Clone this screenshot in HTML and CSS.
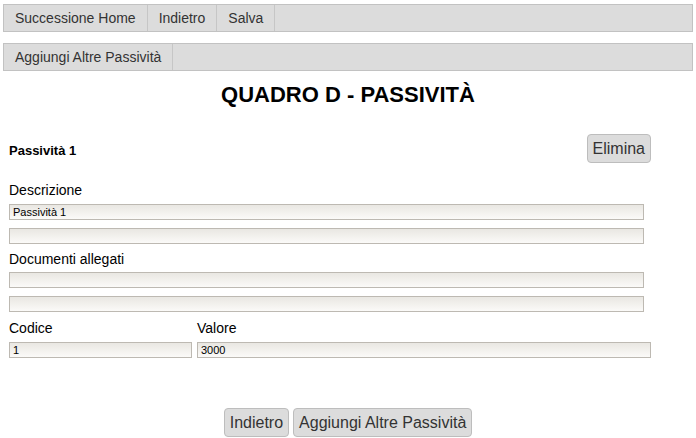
FILE: index.html
```html
<!DOCTYPE html>
<html lang="it">

<head>
    <meta charset="UTF-8">
    <meta name="viewport" content="width=device-width, initial-scale=1.0">
    <title>Quadro D - Passività</title>
    <link rel="stylesheet" href="styles.css">
</head>

<body>
    <div class="navbar">
        <a href="#">Successione Home</a>
        <a href="#">Indietro</a>
        <a href="#">Salva</a>
    </div>

    <div class="navbar navbar-secondo">
        <a href="#">Aggiungi Altre Passività</a>
    </div>

    <h1 class="titolo">QUADRO D - PASSIVITÀ</h1>

    <div class="passivita">
        <div class="passivita-testa">
            <h2>Passività 1</h2>
            <button class="btn">Elimina</button>
        </div>

        <label class="etichetta">Descrizione</label>
        <input class="campo" type="text" value="Passività 1">
        <input class="campo" type="text" value="">

        <label class="etichetta">Documenti allegati</label>
        <input class="campo" type="text" value="">
        <input class="campo" type="text" value="">

        <div class="riga-valori">
            <div>
                <label class="etichetta">Codice</label>
                <input class="campo" type="text" value="1">
            </div>
            <div>
                <label class="etichetta">Valore</label>
                <input class="campo" type="text" value="3000">
            </div>
        </div>
    </div>

    <div class="azioni">
        <button class="btn">Indietro</button>
        <button class="btn">Aggiungi Altre Passività</button>
    </div>
</body>

</html>
```

FILE: styles.css
```css
* {
    padding: 0;
    margin: 0;
    box-sizing: border-box;
}

body {
    background: #fff;
    color: #000;
    font-family: "Liberation Sans", Arial, sans-serif;
    font-size: 14px;
}

/* Barre di navigazione */
.navbar {
    display: flex;
    margin: 4px 3px 0;
    height: 28px;
    background-color: #dcdcdc;
    border: 1px solid #c2c2c2;
}

.navbar a {
    padding: 0 11px;
    line-height: 26px;
    color: #333;
    text-decoration: none;
    border-right: 1px solid #c6c6c6;
    font-size: 14px;
}

.navbar-secondo {
    margin-top: 11px;
}

/* Titolo */
.titolo {
    margin-top: 12px;
    text-align: center;
    font-size: 22px;
    line-height: 24px;
}

/* Blocco passività */
.passivita {
    padding: 0 45px 0 9px;
}

.passivita-testa {
    display: flex;
    justify-content: space-between;
    align-items: center;
    margin-top: 27px;
}

.passivita-testa h2 {
    font-size: 13px;
    padding-top: 4px;
}

.etichetta {
    display: block;
    line-height: 18px;
    margin-top: 5px;
    margin-bottom: 5px;
}

.passivita-testa + .etichetta {
    margin-top: 18px;
}

.campo + .etichetta {
    margin-bottom: 4px;
}

.campo {
    display: block;
    width: 635px;
    height: 16px;
    margin-bottom: 6px;
    padding: 0 3px;
    border: 1px solid #bdb9b2;
    background: linear-gradient(#e9e7e2, #fbfaf8);
    font-family: "Liberation Sans", Arial, sans-serif;
    font-size: 11px;
    color: #000;
}

.campo + .campo {
    margin-top: 8px;
}

.riga-valori {
    display: grid;
    grid-template-columns: 183px 454px;
    gap: 5px;
    margin-top: 7px;
}

.riga-valori .etichetta {
    margin-top: 0;
}

.riga-valori .campo {
    width: 100%;
}

/* Bottoni */
.btn {
    height: 29px;
    padding: 0 5px;
    background-color: #dcdcdc;
    border: 1px solid #bdbdbd;
    border-radius: 4px;
    color: #333;
    font-family: "Liberation Sans", Arial, sans-serif;
    font-size: 16px;
}

.azioni {
    display: flex;
    justify-content: center;
    gap: 4px;
    margin-top: 44px;
}
```
